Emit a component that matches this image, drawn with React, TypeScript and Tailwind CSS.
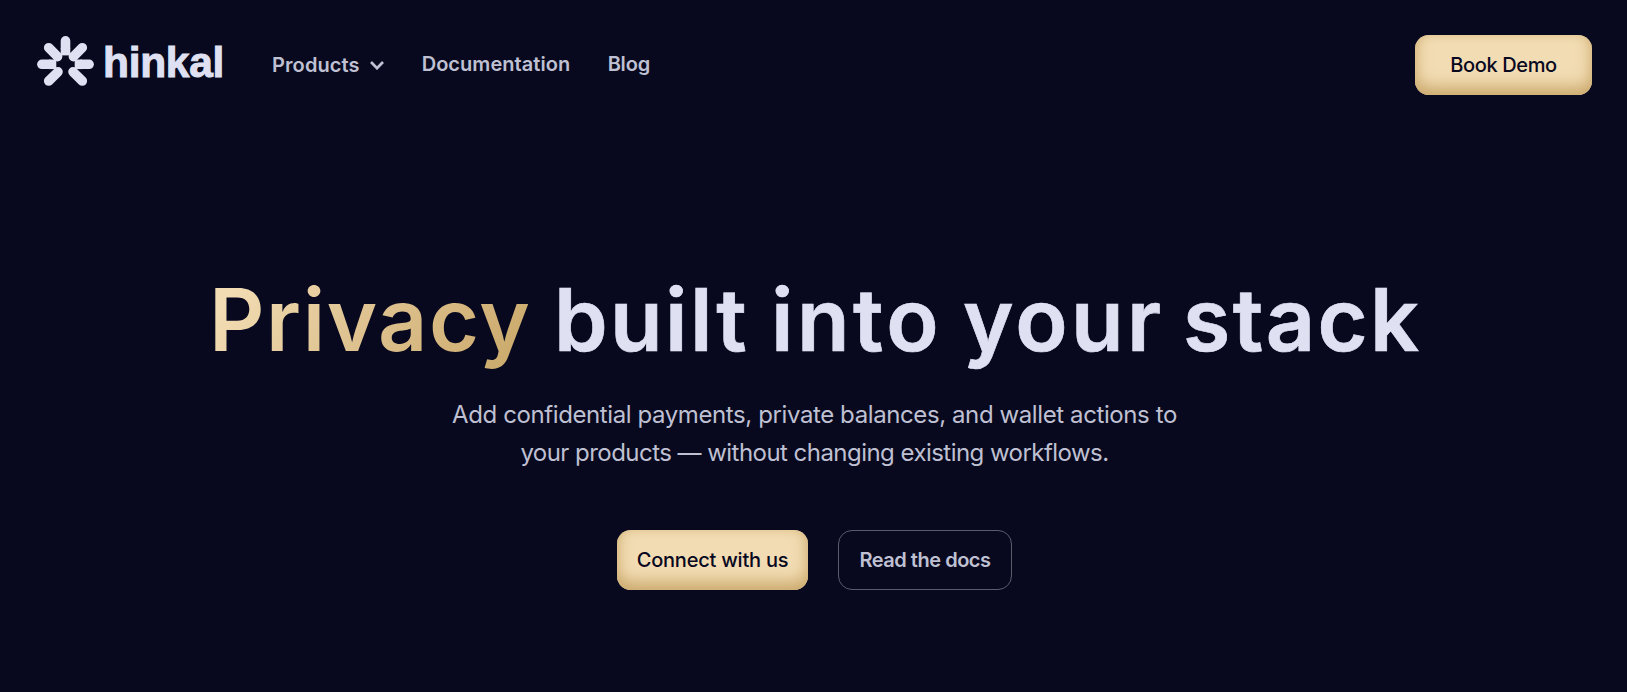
import { clsx } from "clsx";

const navLinks = [
  { label: "Documentation", className: "ml-[38px] w-[186px] tracking-[0.05px]" },
  { label: "Blog", className: "tracking-[-0.2px]" },
];

const headlineWords = [
  { text: "built", className: "w-[217px] tracking-[2.4px]" },
  { text: "into", className: "w-[192px] tracking-[3.5px]" },
  { text: "your", className: "w-[220px] tracking-[3.3px]" },
  { text: "stack", className: "tracking-[2.4px]" },
];

const goldButton =
  "flex h-[60px] items-center justify-center rounded-[14px] bg-[#f2dcb3] text-xl font-medium text-[#08091f] shadow-[inset_0_-8px_16px_0_#cbaa6e,inset_0_0_8px_0_#e6cb9a]";

function LogoMark() {
  return (
    <svg width="57" height="50" viewBox="0 0 57 50" fill="none" aria-hidden="true">
      <g stroke="#dfe1f3" strokeWidth="9.6" strokeLinecap="round">
        <path d="M28.5 4.9V12" />
        <path d="M4.9 28.3H12" />
        <path d="M52.1 28.3H45" />
        <path d="M11.7 11.7L20.6 20.6" />
        <path d="M45.3 11.7L36.4 20.6" />
        <path d="M11.7 45L21 35.8" />
        <path d="M45.3 45L36 35.8" />
      </g>
      <g fill="#dfe1f3">
        <path d="M23.7 12H33.3V19.4H23.7Z" />
        <path d="M12 23.5H19.3V33.1H12Z" />
        <path d="M45 23.5H37.7V33.1H45Z" />
      </g>
    </svg>
  );
}

function Header() {
  return (
    <header className="flex h-[130px] items-start pr-[35px] pl-[37px] text-[#bfc0d2]">
      <a href="#" className="mt-9 flex w-[235px]" aria-label="hinkal home">
        <LogoMark />
        <span
          className="mt-0.5 ml-[9px] text-[42.5px] leading-[50px] font-bold tracking-[-0.3px] text-[#dfe1f3] [-webkit-text-stroke:1px_#dfe1f3]"
          style={{ fontFamily: '"Liberation Sans", sans-serif' }}
        >
          hinkal
        </span>
      </a>
      <nav className="mt-[50px] flex items-start text-xl leading-7 font-semibold">
        <button className="mt-px flex items-center tracking-[0.1px]">
          Products
          <svg className="ml-[10px]" width="14" height="9" viewBox="0 0 14 9" fill="none">
            <path d="M1 1L7 7.2L13 1" stroke="currentColor" strokeWidth="2.7" />
          </svg>
        </button>
        {navLinks.map((link) => (
          <a key={link.label} href="#" className={link.className}>
            {link.label}
          </a>
        ))}
      </nav>
      <button className={clsx(goldButton, "mt-[35px] ml-auto w-[177px] tracking-[-0.37px]")}>
        Book Demo
      </button>
    </header>
  );
}

function Hero() {
  return (
    <main className="flex flex-col items-center">
      <h1 className="mt-[138px] flex w-full pl-[209px] text-[86px] leading-[104px] font-semibold text-[#dfe1f3]">
        <span className="w-[345px] tracking-[1.6px]">
          <span className="inline-block bg-linear-[125deg,#f2dcb3_10%,#e0c493_45%,#cdac6f_90%] bg-clip-text text-transparent">
            Privacy
          </span>
        </span>
        {headlineWords.map((word) => (
          <span
            key={word.text}
            className={clsx("[-webkit-text-stroke:0.7px_#dfe1f3]", word.className)}
          >
            {word.text}
          </span>
        ))}
      </h1>
      <p className="mt-6 ml-0.5 text-center text-2xl leading-[38px] text-[#bfc0d2]">
        <span className="block tracking-[-0.4px]">
          Add confidential payments, private balances, and wallet actions to
        </span>
        <span className="block tracking-[-0.54px]">
          your products — without changing existing workflows.
        </span>
      </p>
      <div className="mt-[58px] ml-0.5 flex gap-[30px]">
        <button className={clsx(goldButton, "w-[191px] tracking-[-0.22px]")}>
          Connect with us
        </button>
        <button className="h-[60px] w-[174px] rounded-[14px] border border-[#5b5b6c] text-xl font-semibold tracking-[-0.48px] text-[#bfc0d2]">
          Read the docs
        </button>
      </div>
    </main>
  );
}

export default function App() {
  return (
    <div className="h-screen overflow-hidden bg-[#08091f] font-['Inter',sans-serif]">
      <Header />
      <Hero />
    </div>
  );
}
